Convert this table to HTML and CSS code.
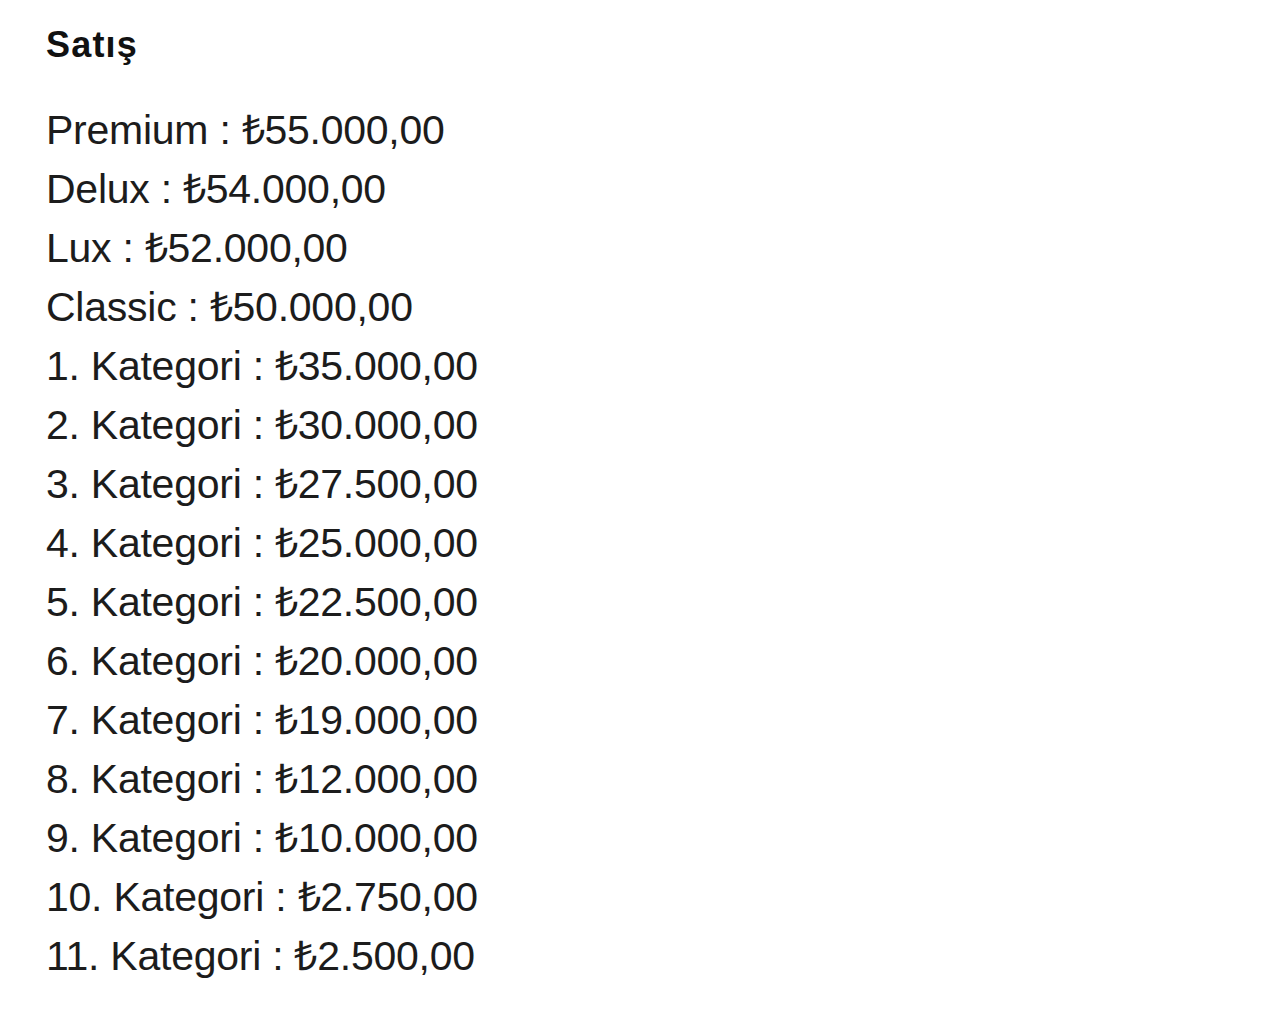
FILE: index.html
```html
<!DOCTYPE html>
<html lang="tr">
<head>
<meta charset="utf-8">
<link rel="stylesheet" href="styles.css">
</head>
<body>
<main class="page">
  <h2 class="title">Satış</h2>
  <ul class="prices">
    <li>Premium : ₺55.000,00</li>
    <li>Delux : ₺54.000,00</li>
    <li>Lux : ₺52.000,00</li>
    <li>Classic : ₺50.000,00</li>
    <li>1. Kategori : ₺35.000,00</li>
    <li>2. Kategori : ₺30.000,00</li>
    <li>3. Kategori : ₺27.500,00</li>
    <li>4. Kategori : ₺25.000,00</li>
    <li>5. Kategori : ₺22.500,00</li>
    <li>6. Kategori : ₺20.000,00</li>
    <li>7. Kategori : ₺19.000,00</li>
    <li>8. Kategori : ₺12.000,00</li>
    <li>9. Kategori : ₺10.000,00</li>
    <li>10. Kategori : ₺2.750,00</li>
    <li>11. Kategori : ₺2.500,00</li>
  </ul>
</main>
</body>
</html>
```

FILE: styles.css
```css
html, body {
  margin: 0;
  padding: 0;
  background: #ffffff;
}
.page {
  padding: 22px 0 0 46px;
  font-family: "Liberation Sans", Arial, sans-serif;
  color: #1c1c1c;
}
.title {
  margin: 0;
  font-size: 36px;
  font-weight: 700;
  line-height: 46px;
  letter-spacing: 1.2px;
  color: #111;
}
.prices {
  list-style: none;
  margin: 0;
  padding: 0;
  margin-top: 33px;
}
.prices li {
  font-size: 41px;
  line-height: 59px;
  letter-spacing: -0.25px;
}
```
